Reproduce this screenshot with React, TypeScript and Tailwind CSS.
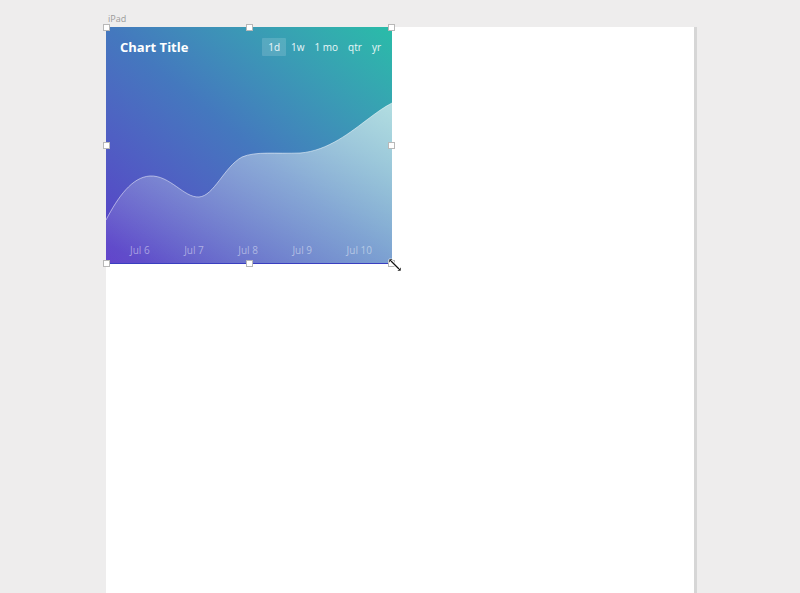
import React from 'react';

const ranges = ['1d', '1w', '1 mo', 'qtr', 'yr'];
const days = ['Jul 6', 'Jul 7', 'Jul 8', 'Jul 9', 'Jul 10'];

const wave =
  'M0 193 C12 170 26 150 44 149 C64 148 78 171 93 170 C108 169 118 140 136 130 C150 124 170 127 194 126 C222 124 246 104 262 92 C270 86 278 80 286 76';

function Handle({ className }: { className: string }) {
  return <span className={`absolute w-[7px] h-[7px] bg-white border border-[#b8b8b8] ${className}`} />;
}

export default function App() {
  return (
    <div className="w-[800px] h-[593px] overflow-hidden bg-[#eeeded] font-['Open_Sans',sans-serif]">
      <div className="ml-[108px] pt-[13px] h-[27px] text-[9px] leading-[11px] text-[#9b9b9b]">iPad</div>
      <div className="ml-[106px] w-[591px] h-[580px] bg-white border-r-[3px] border-[#d6d6d6]">
        {/* selected chart component */}
        <div className="relative w-[286px] h-[237px]">
          <div className="relative flex flex-col justify-between h-full overflow-hidden bg-linear-to-tr from-[#5838c8] via-[#4478be] to-[#29bca8] border-b border-[#3a3fc0]">
            <svg className="absolute inset-0" width="286" height="237" viewBox="0 0 286 237">
              <defs>
                <linearGradient id="area" x1="1" y1="0" x2="0.15" y2="1">
                  <stop offset="0" stopColor="#ffffff" stopOpacity="0.62" />
                  <stop offset="1" stopColor="#ffffff" stopOpacity="0.06" />
                </linearGradient>
              </defs>
              <path d={`${wave} L286 237 L0 237 Z`} fill="url(#area)" />
              <path d={wave} fill="none" stroke="#ffffff" strokeOpacity="0.5" strokeWidth="1" />
            </svg>
            <div className="relative flex items-center justify-between pl-[14px] pr-[6px] pt-[10px]">
              <div className="text-[13px] font-bold text-white leading-[20px]">Chart Title</div>
              <div className="flex items-center text-[10px] text-white/90">
                {ranges.map((r, i) => (
                  <span
                    key={r}
                    className={`px-[5px] h-[18px] leading-[18px] rounded-[1px] ${i === 0 ? 'bg-white/15 px-[6px]' : ''}`}
                  >
                    {r}
                  </span>
                ))}
              </div>
            </div>
            <div className="relative flex justify-between pl-[24px] pr-[20px] pb-[5px] text-[10px] text-white/45">
              {days.map((d) => (
                <span key={d}>{d}</span>
              ))}
            </div>
          </div>
          <Handle className="-left-[3px] -top-[3px]" />
          <Handle className="left-[140px] -top-[3px]" />
          <Handle className="-right-[3px] -top-[3px]" />
          <Handle className="-left-[3px] top-[115px]" />
          <Handle className="-right-[3px] top-[115px]" />
          <Handle className="-left-[3px] -bottom-[3px]" />
          <Handle className="left-[140px] -bottom-[3px]" />
          <Handle className="-right-[3px] -bottom-[3px]" />
          <svg className="absolute left-[282px] top-[231px]" width="14" height="14" viewBox="0 0 14 14">
            <path d="M2 2 L12 12" stroke="#fff" strokeWidth="3" />
            <path d="M2 2 L12 12" stroke="#111" strokeWidth="1.2" />
            <path d="M1 1 L5 1 L1 5 Z" fill="#111" stroke="#fff" strokeWidth="0.6" />
            <path d="M13 13 L9 13 L13 9 Z" fill="#111" stroke="#fff" strokeWidth="0.6" />
          </svg>
        </div>
      </div>
    </div>
  );
}
